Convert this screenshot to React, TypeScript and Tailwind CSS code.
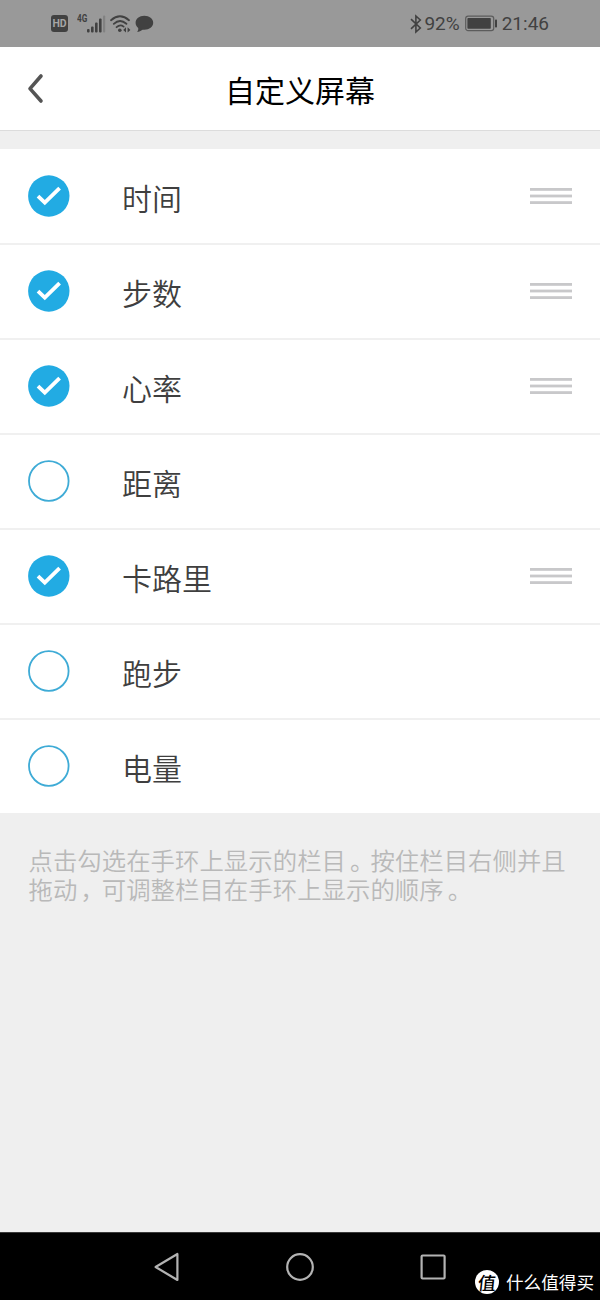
type ScreenItem = {
  name: string;
  checked: boolean;
};

// Items that can be shown on the band
const items: ScreenItem[] = [
  { name: "时间", checked: true },
  { name: "步数", checked: true },
  { name: "心率", checked: true },
  { name: "距离", checked: false },
  { name: "卡路里", checked: true },
  { name: "跑步", checked: false },
  { name: "电量", checked: false },
];

export default function App() {
  return (
    <div className="relative flex h-[1300px] w-[600px] flex-col overflow-hidden bg-[#efefef] font-['Noto_Sans_CJK_SC',sans-serif]">
      <StatusBar />
      <Header />
      <main className="flex-1 pt-[18px]">
        <ul className="bg-white">
          {items.map((item) => (
            <ItemRow key={item.name} item={item} />
          ))}
        </ul>
        <p className="pt-[32px] pl-[28.5px] text-[24.4px] leading-[29px] font-[350] tracking-[0.03px] whitespace-nowrap text-[#b9b9b9]">
          点击勾选在手环上显示的栏目<span className="-mr-[4px] ml-[4px]">。</span>按住栏目右侧并且
          <br />
          拖动<span className="-mr-[3px] ml-[3px]">，</span>可调整栏目在手环上显示的顺序<span className="ml-[4px]">。</span>
        </p>
      </main>
      <NavigationBar />
      <Watermark />
    </div>
  );
}

function StatusBar() {
  return (
    <div className="flex h-[47px] shrink-0 items-center justify-between bg-[#999999] pr-[51px] pl-[51px] font-[Roboto,sans-serif] text-[#414141]">
      <div className="flex items-center">
        <span className="flex h-[17px] w-[17px] items-center justify-center rounded-[3px] bg-[#414141] text-[10.5px] font-bold text-[#a5a5a5]">
          HD
        </span>
        <span className="-mt-[9px] ml-[9px] w-[10px] origin-left scale-x-[0.78] text-[10.5px] leading-[10px] font-bold">4G</span>
        {/* signal */}
        <svg width="19" height="18" viewBox="0 0 19 18" fill="currentColor">
          <rect x="0" y="14" width="2.6" height="3.4" rx="1" />
          <rect x="4" y="11.5" width="2.6" height="5.9" rx="1" />
          <rect x="8" y="7.5" width="2.6" height="9.9" rx="1" />
          <rect x="12" y="3.5" width="2.6" height="13.9" rx="1" />
          <rect x="16" y="0.5" width="2.2" height="16.9" rx="1" fill="#828282" />
        </svg>
        {/* wifi */}
        <svg className="ml-[4px]" width="22" height="18" viewBox="0 0 22 18" fill="none" stroke="currentColor" strokeWidth="1.8" strokeLinecap="round">
          <path d="M1 5.2Q10 -2.6 19 5.2M3.8 8.8Q10 3.2 16.4 8.8M6.6 12.2Q10.2 9 13.6 11.6" />
          <circle cx="9.8" cy="15.3" r="1.8" fill="currentColor" stroke="none" />
          <path d="M16 12.3L13.2 15L16 17.6ZM17.6 12.3L20.4 15L17.6 17.6Z" fill="currentColor" stroke="none" />
        </svg>
        {/* message */}
        <svg className="ml-[3px] mt-px" width="19" height="18" viewBox="0 0 19 18" fill="currentColor">
          <path d="M9.3 0.8C14.4 0.8 18.2 3.9 18.2 7.8S14.4 14.8 9.3 14.8L7.5 14.7C6 16 3.8 16.9 2 16.8C3.2 15.6 3.4 14.2 3.2 12.9C1.4 11.6 0.6 9.8 0.6 7.8C0.6 3.9 4.3 0.8 9.3 0.8Z" />
        </svg>
      </div>
      <div className="flex items-center text-[19px]">
        <svg width="12" height="20" viewBox="0 0 12 20" fill="none" stroke="currentColor" strokeWidth="1.6">
          <path d="M1 5.2L10.3 14L5.9 18V2L10.3 6L1 14.8" />
        </svg>
        <span className="ml-[2px] pt-px">92%</span>
        <svg className="ml-[5px]" width="33" height="17" viewBox="0 0 33 17">
          <rect x="0.7" y="1.2" width="28" height="14.4" rx="2.4" fill="none" stroke="#5c5c5c" strokeWidth="1.2" />
          <rect x="2.4" y="3" width="23.4" height="10.8" rx="0.8" fill="currentColor" />
          <rect x="30" y="4.5" width="2" height="8" rx="0.7" fill="currentColor" />
        </svg>
        <span className="ml-[4px] pt-px">21:46</span>
      </div>
    </div>
  );
}

function Header() {
  return (
    <header className="grid h-[84px] shrink-0 grid-cols-[100px_1fr_100px] items-center border-b border-[#dcdcdc] bg-white">
      <svg className="ml-[26px]" width="20" height="32" viewBox="0 0 20 32" fill="none" stroke="#555555" strokeWidth="3.6" strokeLinecap="round" strokeLinejoin="round">
        <path d="M15 3L4 15.6L15 28" />
      </svg>
      <h1 className="text-center text-[30px] leading-[40px] text-black">自定义屏幕</h1>
    </header>
  );
}

function ItemRow({ item }: { item: ScreenItem }) {
  return (
    <li className="flex h-[95px] items-center border-t-2 border-[#f0f0f0] pr-[28px] pb-px pl-[28px] first:h-[94px] first:border-t-0 first:pb-0">
      {item.checked ? <CheckedIcon /> : <UncheckedIcon />}
      <span className="ml-[52px] flex-1 pt-[2px] text-[30px] leading-[40px] font-[350] text-[#3f3f3f]">{item.name}</span>
      {/* drag handle, only for the active items */}
      {item.checked && (
        <svg width="42" height="18" viewBox="0 0 42 18" fill="#c8c8ca">
          <rect x="0" y="1" width="42" height="2.8" />
          <rect x="0" y="7.6" width="42" height="2.8" />
          <rect x="0" y="14.2" width="42" height="2.8" />
        </svg>
      )}
    </li>
  );
}

function CheckedIcon() {
  return (
    <svg width="42" height="42" viewBox="0 0 42 42" fill="none">
      <circle cx="20.8" cy="21" r="20.7" fill="#22abe3" />
      <path d="M10 21.2L16.8 27.7L31.6 13.2" stroke="#ffffff" strokeWidth="3.8" />
    </svg>
  );
}

function UncheckedIcon() {
  return (
    <svg width="42" height="42" viewBox="0 0 42 42" fill="none">
      <circle cx="20.8" cy="21" r="19.8" stroke="#3eabd6" strokeWidth="1.8" />
    </svg>
  );
}

// Android navigation keys
function NavigationBar() {
  return (
    <nav className="flex h-[68px] shrink-0 items-center justify-between border-t border-[#3a3a3a] bg-black pt-px pr-[153px] pl-[153px]">
      <svg width="28" height="30" viewBox="0 0 28 30" fill="none" stroke="#b3b3b3" strokeWidth="2.2" strokeLinejoin="round">
        <path d="M24.4 2V28L2.6 15Z" />
      </svg>
      <svg width="30" height="30" viewBox="0 0 30 30" fill="none" stroke="#b3b3b3" strokeWidth="2.2">
        <circle cx="15" cy="15" r="12.8" />
      </svg>
      <svg width="28" height="28" viewBox="0 0 28 28" fill="none" stroke="#b3b3b3" strokeWidth="2.2">
        <rect x="2.6" y="2.5" width="23" height="23" rx="1" />
      </svg>
    </nav>
  );
}

function Watermark() {
  return (
    <div className="absolute right-[6px] bottom-[5px] flex items-center gap-[7px]">
      <span className="flex h-[24px] w-[24px] items-center justify-center rounded-full bg-white text-[18px] leading-[24px] font-medium text-black">
        <span className="-mt-px -skew-x-6">值</span>
      </span>
      <span className="text-[17.6px] leading-[26px] text-white">什么值得买</span>
    </div>
  );
}
